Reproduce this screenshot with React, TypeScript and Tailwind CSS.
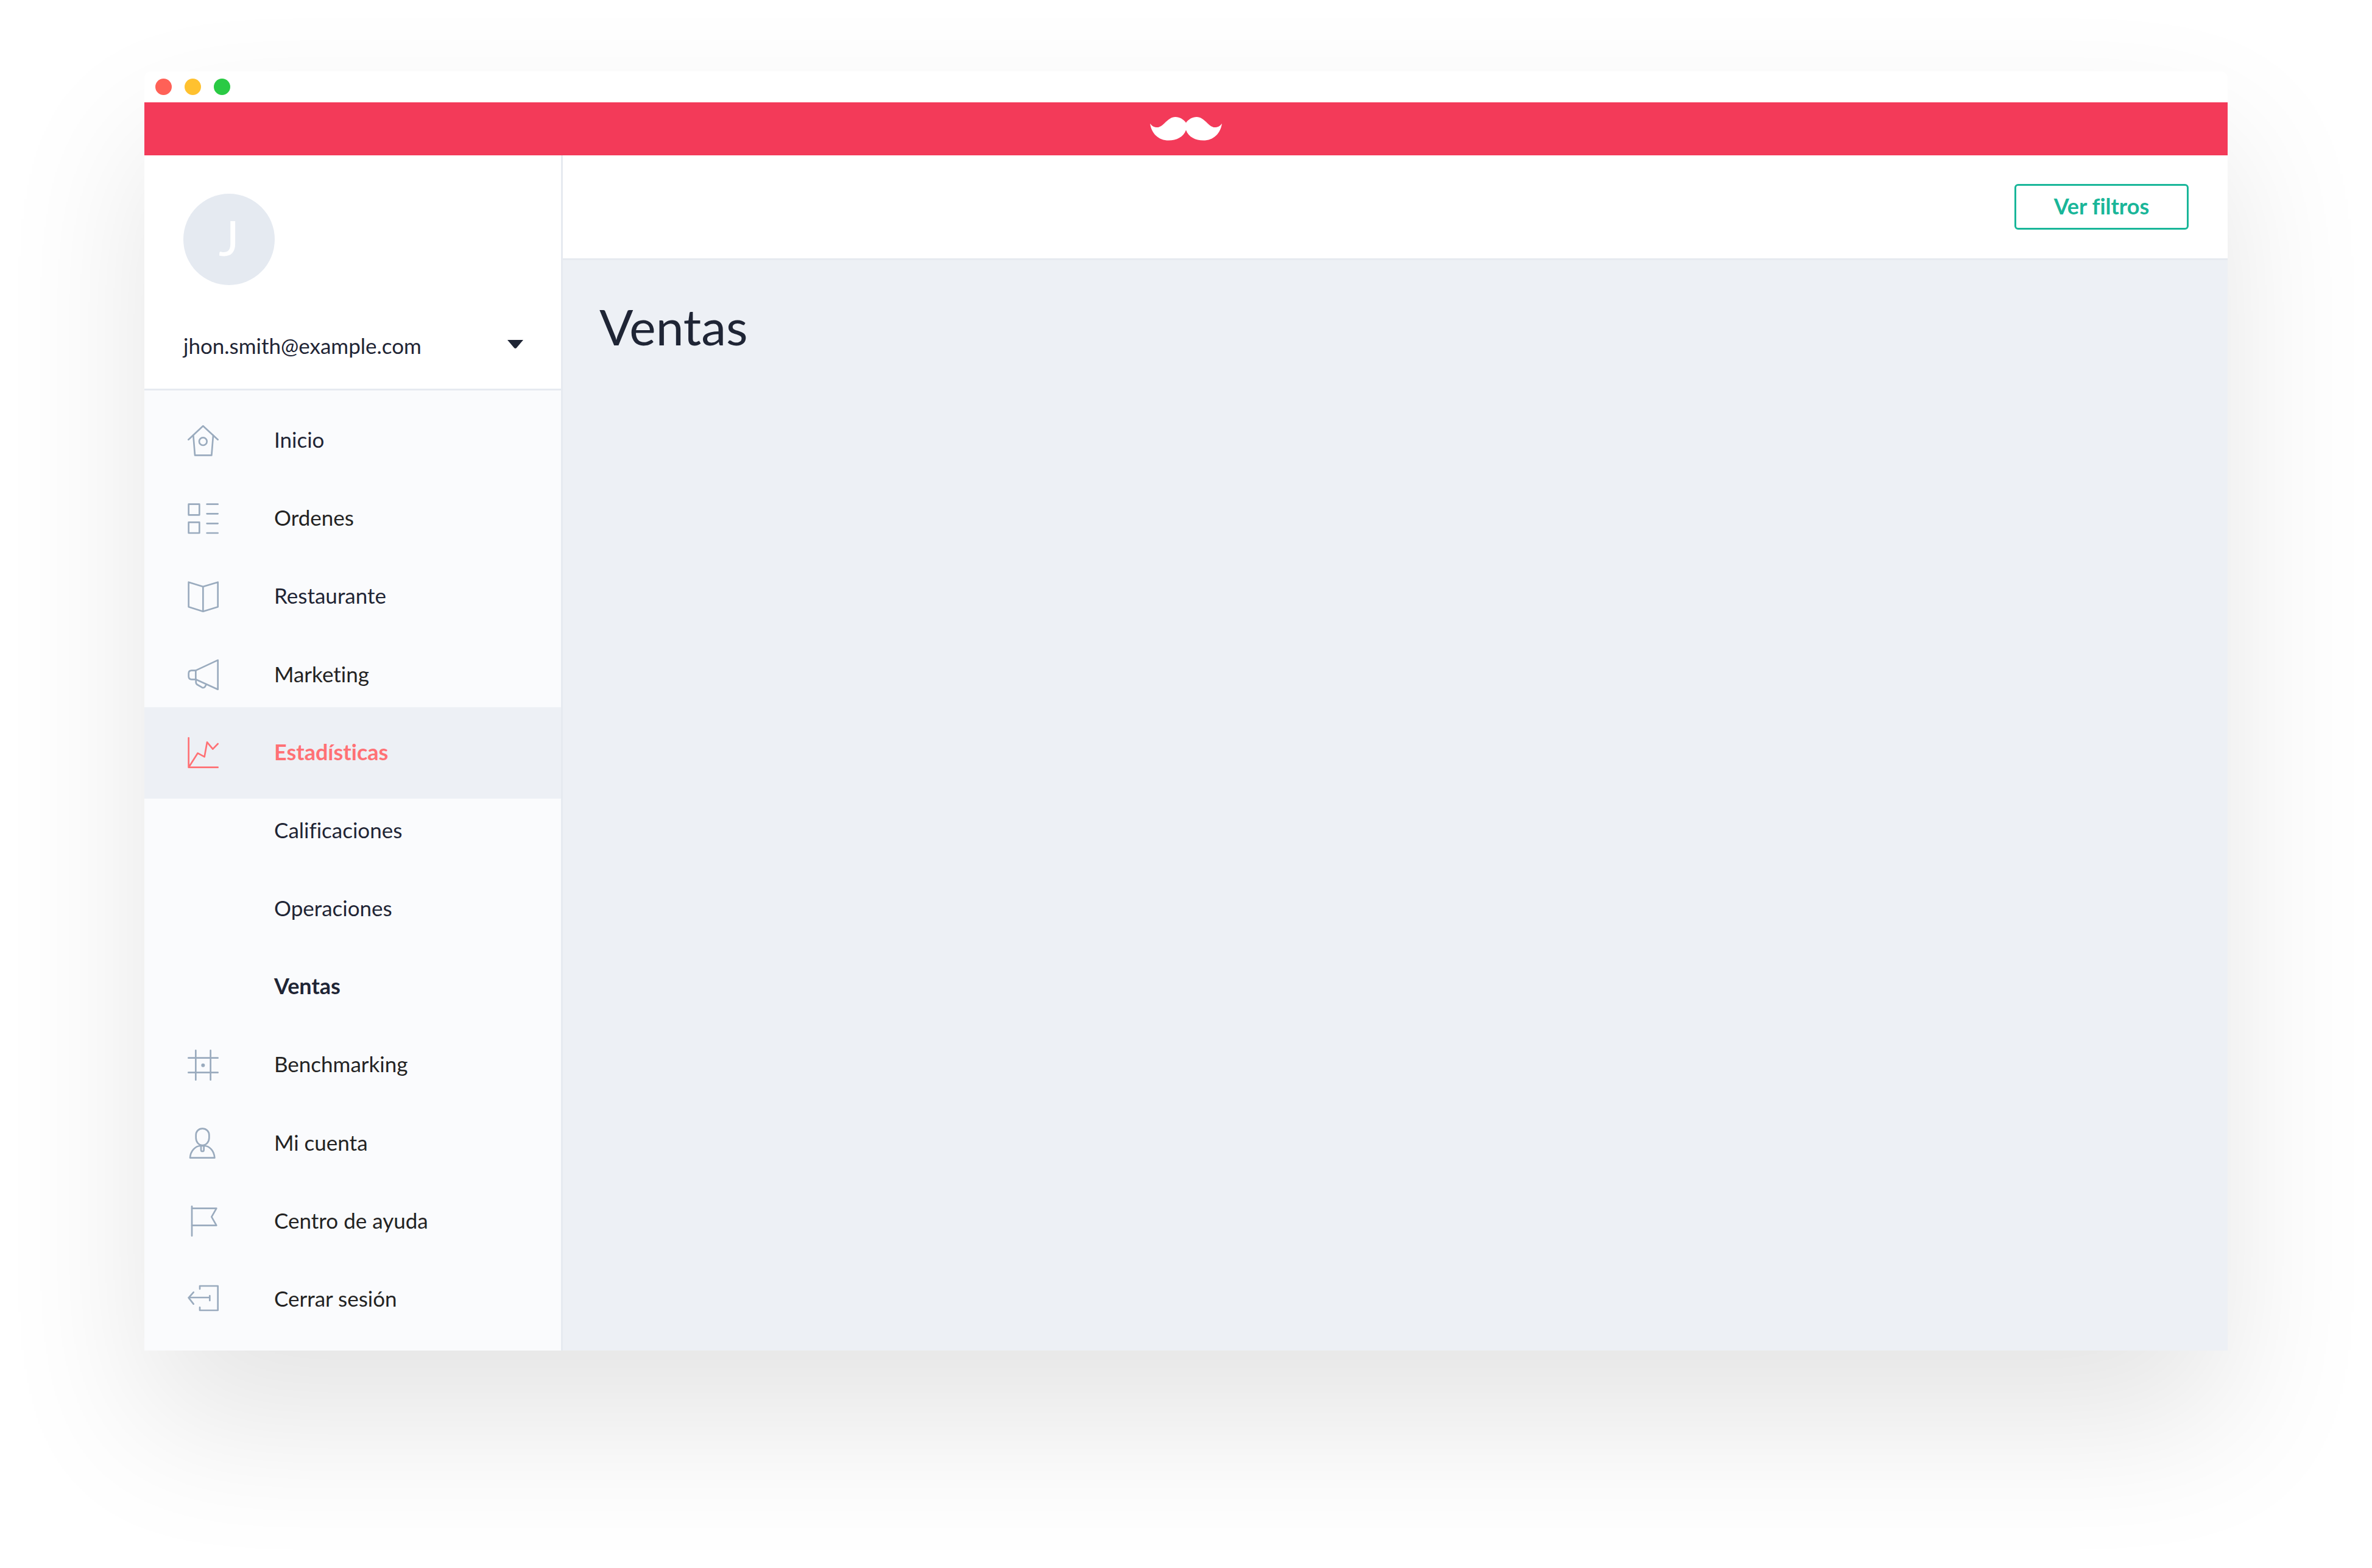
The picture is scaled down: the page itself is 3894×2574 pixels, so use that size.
import type { ReactNode } from 'react';

type NavItem = {
  label: string;
  icon?: ReactNode;
  tone: string;
  active?: boolean;
};

const NAVY = 'text-[#1f2535]';
const BLACK = 'text-[#232323]';

function Icon({ children }: { children: ReactNode }) {
  return (
    <svg
      aria-hidden="true"
      viewBox="0 0 153 153"
      className="size-[51px]"
      fill="none"
      stroke="currentColor"
      strokeWidth="8"
      strokeLinecap="round"
      strokeLinejoin="round"
    >
      {children}
    </svg>
  );
}

const home = (
  <Icon>
    <path d="M4 71L76 4L149 71" />
    <path d="M28 50L36 148H118L126 50" />
    <circle cx="76" cy="80" r="19" />
  </Icon>
);

const orders = (
  <Icon>
    <path d="M5 5H58V58H5ZM5 94H58V147H5Z" />
    <path d="M95 5H149M95 52H149M95 100H149M95 147H149" />
  </Icon>
);

const menuBook = (
  <Icon>
    <path d="M5 5L76 27L149 5V127L76 149L5 127ZM76 27V149" />
  </Icon>
);

const megaphone = (
  <Icon>
    <path d="M40 56L149 5V149L40 100Z" />
    <path d="M40 56H20Q5 56 5 71V85Q5 100 20 100H40" />
    <path d="M41 101V114Q41 122 48 126L72 140Q80 143 85 137L92 125" />
  </Icon>
);

const chart = (
  <Icon>
    <path d="M5 4V149H149" />
    <path d="M7 146L50 79L83 97L96 25L124 59L149 33" />
  </Icon>
);

const grid = (
  <Icon>
    <path d="M40 4V149M113 4V149M4 41H149M4 113H149" />
    <circle cx="76" cy="77" r="9" fill="currentColor" stroke="none" />
  </Icon>
);

const user = (
  <Icon>
    <path d="M73 5C92 5 106 19 106 37V50C106 70 92 87 73 87C54 87 41 70 41 50V37C41 19 54 5 73 5Z" />
    <path d="M12 149H133C131 115 108 90 82 90H64C38 90 14 115 12 149Z" />
    <path d="M66 91V110a7 7 0 0 0 14 0V91" />
  </Icon>
);

const flag = (
  <Icon>
    <path d="M21 4V149" />
    <path d="M21 14H142L118 56L142 98H21" />
  </Icon>
);

const exit = (
  <Icon>
    <path d="M60 27V12H149V132H60V117" />
    <path d="M5 69H108M109 60V84M29 43L5 70L29 101" />
  </Icon>
);

const items: NavItem[] = [
  { label: 'Inicio', icon: home, tone: NAVY },
  { label: 'Ordenes', icon: orders, tone: BLACK },
  { label: 'Restaurante', icon: menuBook, tone: NAVY },
  { label: 'Marketing', icon: megaphone, tone: BLACK },
  { label: 'Estadísticas', icon: chart, tone: 'text-[#ff7175] text-[36px] font-bold', active: true },
  { label: 'Calificaciones', tone: NAVY },
  { label: 'Operaciones', tone: NAVY },
  { label: 'Ventas', tone: 'text-[#1f2535] text-[36px] font-bold' },
  { label: 'Benchmarking', icon: grid, tone: BLACK },
  { label: 'Mi cuenta', icon: user, tone: BLACK },
  { label: 'Centro de ayuda', icon: flag, tone: BLACK },
  { label: 'Cerrar sesión', icon: exit, tone: BLACK },
];

function TitleBar() {
  return (
    <div className="flex h-[51px] items-center gap-[21px] rounded-t-xl bg-white px-[18px]">
      <span className="size-[27px] rounded-full bg-[#ff6157]" />
      <span className="size-[27px] rounded-full bg-[#ffc12f]" />
      <span className="size-[27px] rounded-full bg-[#2aca44]" />
    </div>
  );
}

function BrandBar() {
  return (
    <div className="flex h-[87px] items-center justify-center bg-[#f33a59]">
      <svg role="img" aria-label="Bigote" viewBox="85 97 352 115" className="w-[118px]" fill="#fff">
        <path d="M85 129C95 143 106 148 120 148C150 148 170 97 209 97C230 97 248 108 261 125C274 108 292 97 313 97C352 97 372 148 402 148C416 148 427 143 437 129C430 178 396 212 346 212C308 212 273 195 261 161C249 195 214 212 176 212C126 212 92 178 85 129Z" />
      </svg>
    </div>
  );
}

function Account() {
  return (
    <div className="flex flex-col gap-[77px] border-b-3 border-[#e6eaf0] bg-white pt-[63px] pr-[62px] pb-[45px] pl-16">
      <div className="flex size-[150px] items-center justify-center rounded-full bg-[#e5eaf1] pb-2 text-[80px] text-white">
        J
      </div>
      <button type="button" className="flex h-12 items-center justify-between text-[#1f2535]">
        <span className="pb-1">jhon.smith@example.com</span>
        <svg aria-hidden="true" viewBox="0 0 26 14" className="mb-2 w-[26px]" fill="currentColor">
          <path d="M0 0H26L15 13Q13 15 11 13Z" />
        </svg>
      </button>
    </div>
  );
}

function Sidebar() {
  return (
    <aside className="flex w-[687px] shrink-0 flex-col border-r-3 border-[#e6eaf0] bg-[#fafbfd]">
      <Account />
      <nav className="flex flex-1 flex-col pt-[18px] pb-5">
        <ul className="flex flex-1 flex-col">
          {items.map(({ label, icon, tone, active }) => (
            <li key={label} className="flex min-h-32 flex-1 basis-0 items-center">
              <a
                href="#"
                className={`flex w-full items-center pl-[71px] ${
                  active ? '-my-3 h-[150px] bg-[#edf0f5]' : 'h-32'
                }`}
              >
                <span className={`w-[142px] shrink-0 ${active ? 'text-[#ff7175]' : 'text-[#9aabbe]'}`}>
                  {icon}
                </span>
                <span className={`pb-1 ${tone}`}>{label}</span>
              </a>
            </li>
          ))}
        </ul>
      </nav>
    </aside>
  );
}

export default function App() {
  return (
    <div className="flex min-h-screen flex-col bg-white px-[237px] pt-[117px] pb-[357px] font-['Lato',sans-serif] text-[35px] leading-12 [font-variant-ligatures:none]">
      <div className="flex flex-1 flex-col rounded-t-xl shadow-[0_120px_240px_rgba(0,0,0,0.105)]">
        <TitleBar />
        <BrandBar />
        <div className="flex flex-1">
          <Sidebar />
          <div className="flex flex-1 flex-col bg-[#edf0f5]">
            <header className="flex h-[172px] items-center justify-end border-b-3 border-[#e6eaf0] bg-white px-16">
              <button
                type="button"
                className="h-[75px] w-[286px] rounded-md border-3 border-[#19b699] pb-1 text-[36px] font-bold text-[#19b699]"
              >
                Ver filtros
              </button>
            </header>
            <main className="px-15 pt-15">
              <h1 className="text-[82px] leading-24 text-[#1f2535]">Ventas</h1>
            </main>
          </div>
        </div>
      </div>
    </div>
  );
}
